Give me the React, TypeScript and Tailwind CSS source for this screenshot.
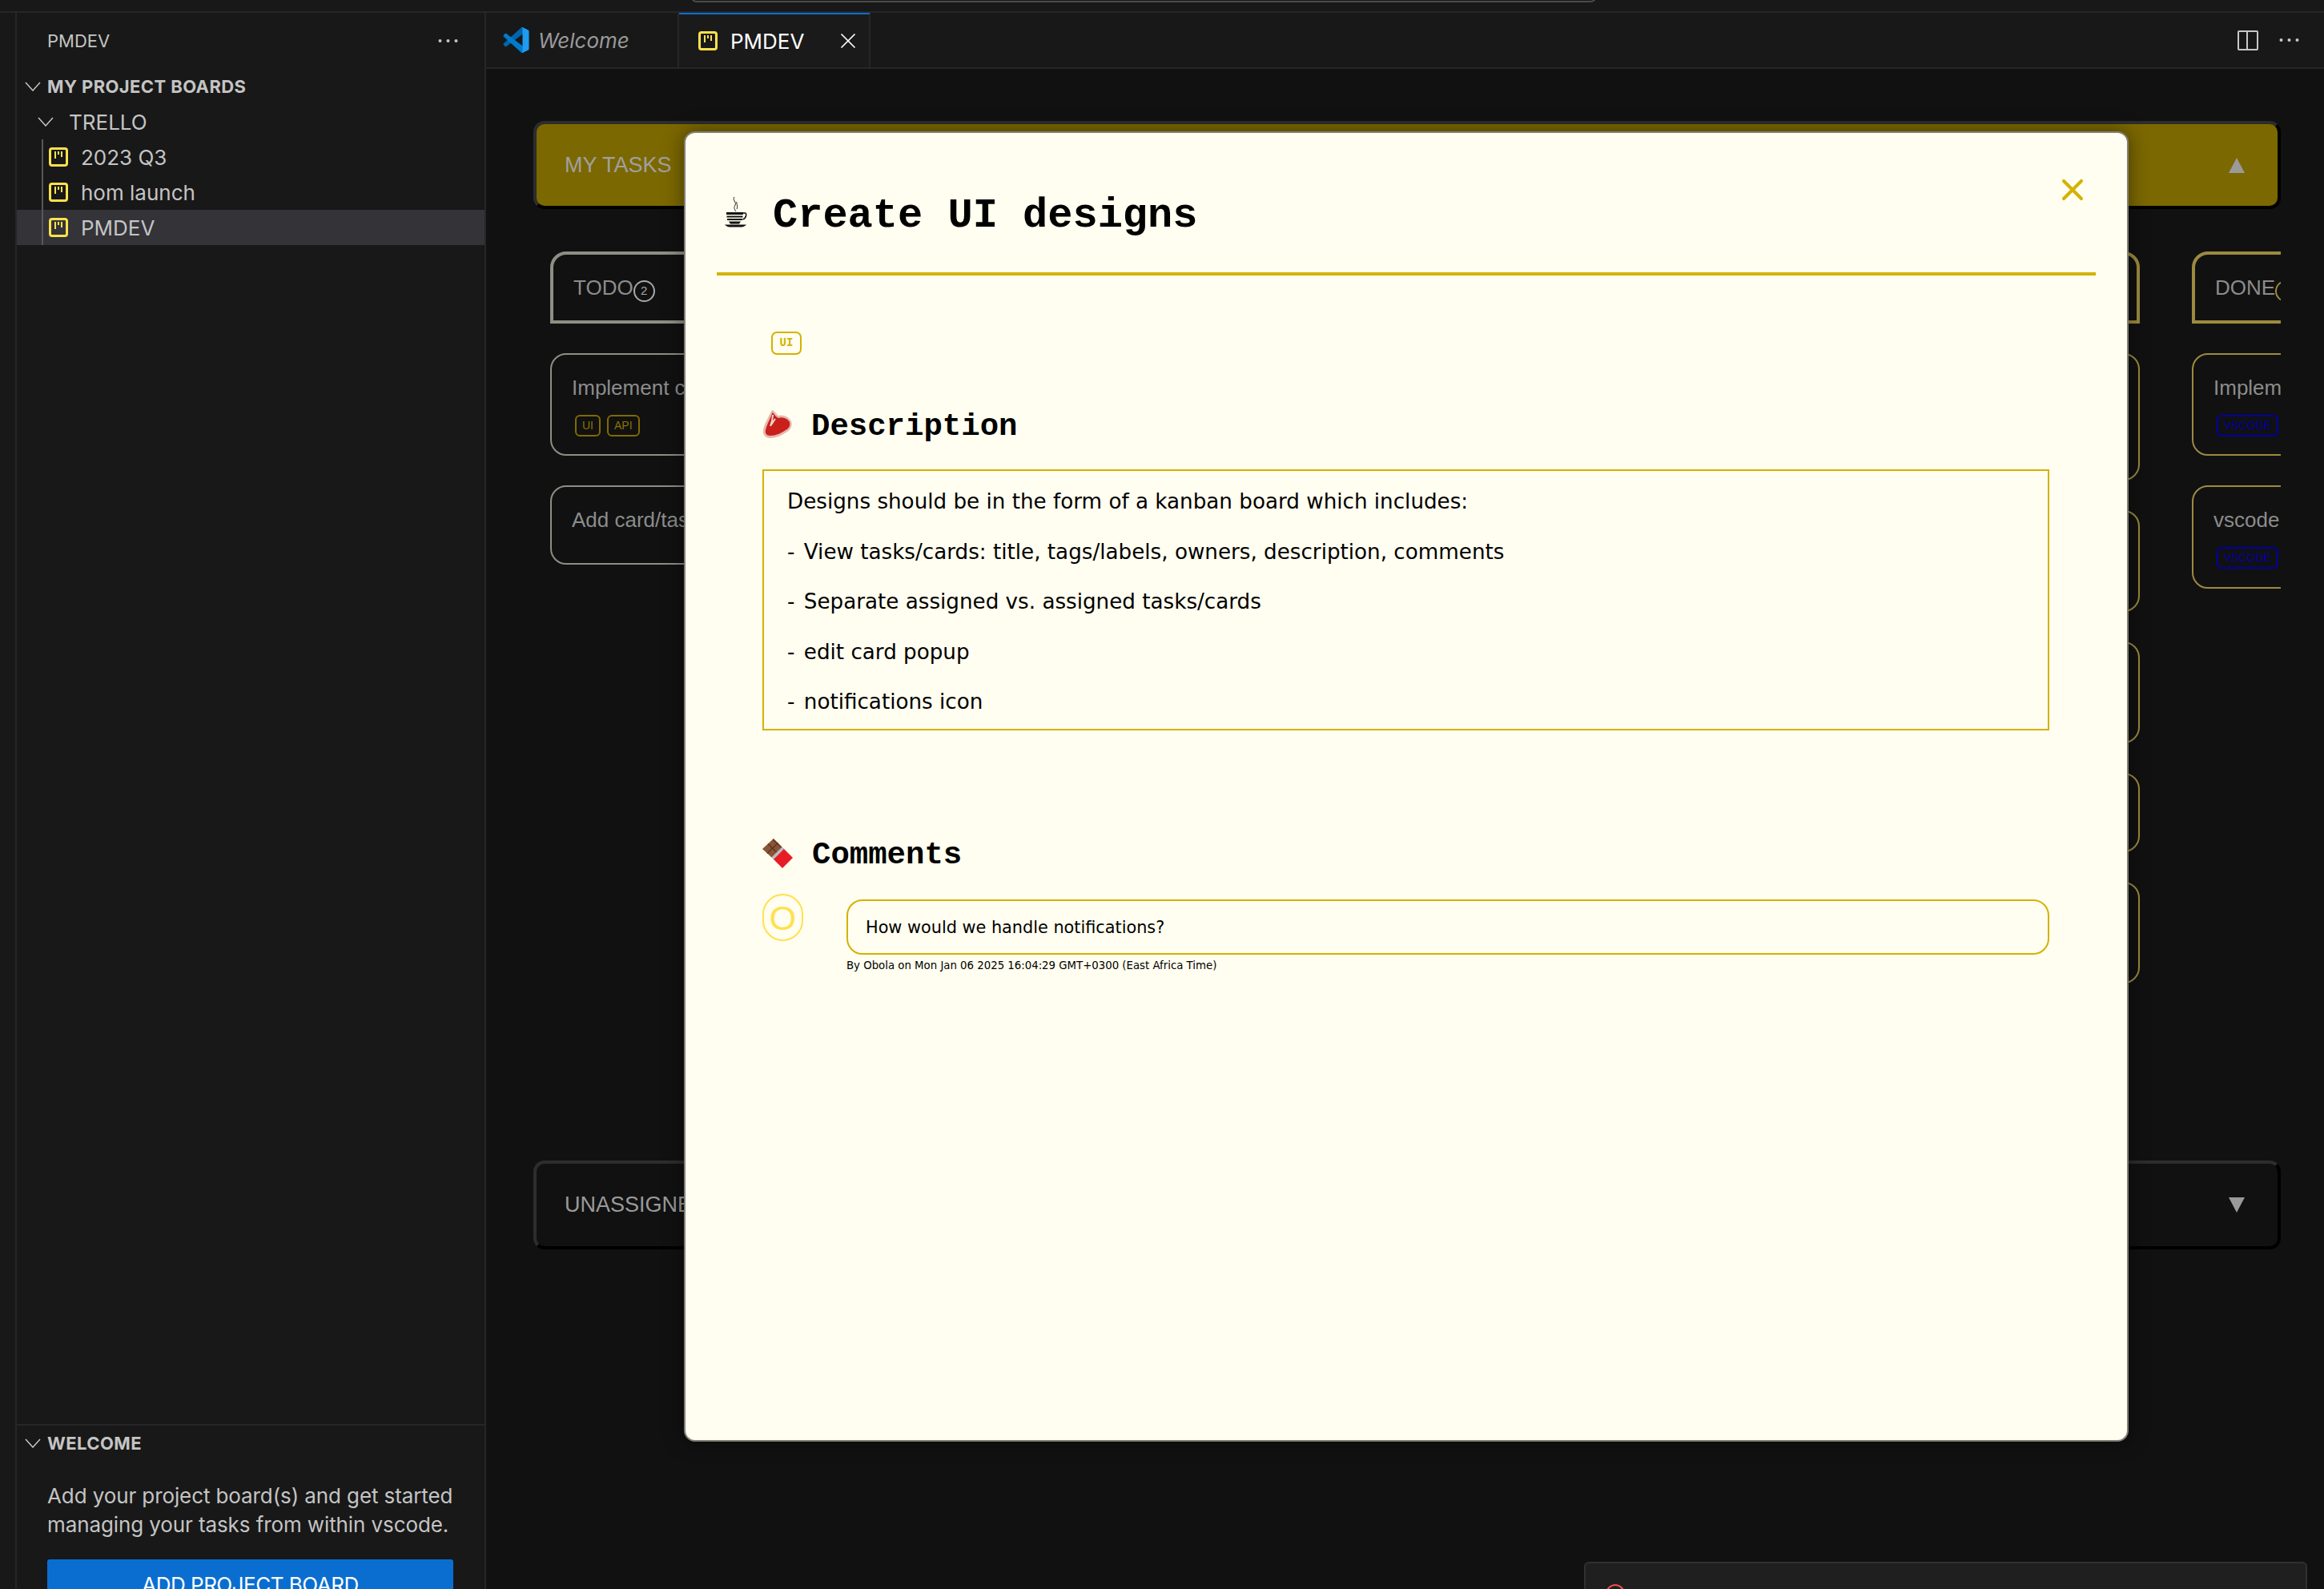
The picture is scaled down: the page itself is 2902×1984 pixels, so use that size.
import { X } from "lucide-react";

function BoardIcon() {
  return (
    <svg width="24" height="24" viewBox="0 0 24 24" fill="none" className="shrink-0">
      <rect x="1.5" y="1.5" width="21" height="21" rx="2.5" stroke="#ffe14d" strokeWidth="3" />
      <path d="M8 5v9M12 5v4M16 5v7" stroke="#ffe14d" strokeWidth="2" />
    </svg>
  );
}

function VscodeLogo() {
  return (
    <svg width="33" height="32" viewBox="0 0 100 100">
      <path fill="#0065A9" d="M96.4614 10.7962L75.8569 0.875542C73.4719 -0.272773 70.6217 0.211611 68.75 2.08333L1.29858 63.5832C-0.515693 65.2373 -0.513607 68.0937 1.30308 69.7452L6.81272 74.754C8.29793 76.1042 10.5347 76.2036 12.1338 74.9905L93.3609 13.3699C96.086 11.3026 100 13.2462 100 16.6667V16.4275C100 14.0265 98.6246 11.8378 96.4614 10.7962Z" />
      <path fill="#007ACC" d="M96.4614 89.2038L75.8569 99.1245C73.4719 100.273 70.6217 99.7884 68.75 97.9167L1.29858 36.4168C-0.515693 34.7627 -0.513607 31.9063 1.30308 30.2548L6.81272 25.246C8.29793 23.8958 10.5347 23.7964 12.1338 25.0095L93.3609 86.6301C96.086 88.6974 100 86.7538 100 83.3333V83.5725C100 85.9735 98.6246 88.1622 96.4614 89.2038Z" />
      <path fill="#1F9CF0" d="M75.8578 99.1263C73.4721 100.274 70.6219 99.7885 68.75 97.9166C71.0564 100.223 75 98.5895 75 95.3278V4.67213C75 1.41039 71.0564 -0.223106 68.75 2.08329C70.6219 0.211402 73.4721 -0.273666 75.8578 0.873633L96.4587 10.7807C98.6234 11.8217 100 14.0112 100 16.4132V83.5871C100 85.9891 98.6234 88.1786 96.4586 89.2196L75.8578 99.1263Z" />
    </svg>
  );
}

function CoffeeIcon() {
  return (
    <svg width="30" height="40" viewBox="0 0 30 40" fill="none" className="shrink-0">
      <path d="M13 1c-3 4 3 6 1 10s-1 5 1 8M16 7c-1 3 2 4 0 9" stroke="#222" strokeWidth="1" />
      <path d="M3 20h21v3H3zM3.5 24.5h20v2h-20zM4 28h19v2H4zM6 31.500h15l-2 3H8z" fill="#111" />
      <path d="M24 21h2.500c2 0 2 6-3 8" stroke="#111" strokeWidth="1.500" />
      <path d="M1 35.500h27c-2 2.500-5 3-8 3H9c-3 0-6-.5-8-3z" fill="#111" />
    </svg>
  );
}

function SteakIcon() {
  return (
    <svg width="36" height="36" viewBox="0 0 36 36" className="ml-[1px] shrink-0">
      <path d="M11 0C15 1 16 5 19 7C24 5 32 8 35 14C37 20 34 24 30 27C24 31 17 35 9 35C3 35-1 31 0 25C1 18 7 8 11 0Z" fill="#e6b9ae" />
      <path d="M11.500 3C14 5 15 8 19 10C24 8 30 10 33 15C34 20 32 23 28 25C22 29 16 32 9 32C4 32 2 29 3 25C4 19 9 11 11.500 3Z" fill="#c9201c" />
      <path d="M12 6C12 10 11 15 9 20M15 11L9.500 19" stroke="#f2d8d0" strokeWidth="2" fill="none" />
    </svg>
  );
}

function ChocolateIcon() {
  return (
    <svg width="38" height="37" viewBox="0 0 38 37" className="shrink-0">
      <path d="M14 0L25 11 12 24 0 13z" fill="#8a5436" />
      <path d="M19.500 5.500L6 18.500M7 6.500l11.500 11.500M13 1l11.500 11" stroke="#5e3320" strokeWidth="1.200" fill="none" />
      <path d="M26 12L38 24 25 37 13 25z" fill="#e81c24" />
      <path d="M24.500 10.500L27 13 14 26l-2.500-2.500z" fill="#b9bcc0" />
    </svg>
  );
}

function Chevron() {
  return (
    <svg width="20" height="12" viewBox="0 0 20 12" fill="none" className="shrink-0">
      <path d="M1 1l9 10 9-10" stroke="#c4c4c4" strokeWidth="1.500" />
    </svg>
  );
}

function Dots({ color }: { color: string }) {
  return (
    <svg width="25" height="6" viewBox="0 0 25 6" className="shrink-0">
      <circle cx="2.500" cy="3" r="2" fill={color} />
      <circle cx="12.500" cy="3" r="2" fill={color} />
      <circle cx="22.500" cy="3" r="2" fill={color} />
    </svg>
  );
}

function SidebarRow({ label, active }: { label: string; active?: boolean }) {
  return (
    <div className={`flex h-[44px] items-center pl-[40px] ${active ? "bg-[#333338]" : ""}`}>
      <BoardIcon />
      <span className="ml-[16px] text-[26px] text-[#c4c4c4]">{label}</span>
    </div>
  );
}

function Sidebar() {
  return (
    <aside className="flex w-[588px] shrink-0 flex-col border-r-2 border-l-2 border-[#262626] bg-[#181818] font-['Inter',sans-serif]">
      <div className="flex h-[70px] items-center justify-between pl-[38px] pr-[33px]">
        <span className="text-[22px] text-[#c4c4c4]">PMDEV</span>
        <Dots color="#c4c4c4" />
      </div>
      <div className="flex h-[44px] items-center pl-[10px]">
        <Chevron />
        <span className="ml-[8px] text-[22px] font-bold tracking-[0.4px] text-[#c4c4c4]">MY PROJECT BOARDS</span>
      </div>
      <div className="flex h-[44px] items-center pl-[26px]">
        <Chevron />
        <span className="ml-[19px] text-[26px] text-[#c4c4c4]">TRELLO</span>
      </div>
      <div className="relative">
        <div className="absolute left-[31px] top-0 bottom-0 w-[2px] bg-[#585858]" />
        <SidebarRow label="2023 Q3" />
        <SidebarRow label="hom launch" />
        <SidebarRow label="PMDEV" active />
      </div>
      <div className="flex-1" />
      <div className="h-[206px] shrink-0 overflow-hidden border-t-2 border-[#262626]">
        <div className="flex h-[44px] items-center pl-[10px]">
          <Chevron />
          <span className="ml-[8px] text-[22px] font-bold tracking-[0.4px] text-[#c4c4c4]">WELCOME</span>
        </div>
        <p className="mt-[26px] whitespace-nowrap pl-[38px] text-[26px] leading-[36px] tracking-[-0.1px] text-[#c4c4c4]">
          Add your project board(s) and get started
          <br />
          managing your tasks from within vscode.
        </p>
        <div className="ml-[38px] mr-[39px] mt-[25px] flex h-[60px] justify-center rounded-[3px] bg-[#0a6ed1] pt-[12px] text-[26px] tracking-[-0.5px] text-white">
          ADD PROJECT BOARD
        </div>
      </div>
    </aside>
  );
}

function TabBar() {
  return (
    <div className="flex h-[70px] shrink-0 items-stretch border-b-2 border-[#262626] bg-[#181818] font-['Inter',sans-serif]">
      <div className="flex w-[241px] items-center pl-[21px] border-r-2 border-[#262626]">
        <VscodeLogo />
        <span className="ml-[11px] text-[26px] italic text-[#9a9a9a]">Welcome</span>
      </div>
      <div className="flex w-[239px] items-center border-r-2 border-t-2 border-r-[#262626] border-t-[#0a6ed1] bg-[#1a1a1a] pl-[24px]">
        <BoardIcon />
        <span className="ml-[16px] text-[26px] text-white">PMDEV</span>
        <X size={32} strokeWidth={1.300} className="ml-[39px] text-white" />
      </div>
      <div className="flex flex-1 items-center justify-end gap-[26px] pr-[31px]">
        <div className="flex h-[25px] w-[26px] rounded-[2px] border-2 border-[#c8c8c8]">
          <div className="w-1/2 border-r-2 border-[#c8c8c8]" />
        </div>
        <Dots color="#c8c8c8" />
      </div>
    </div>
  );
}

function Tag({ label, className }: { label: string; className: string }) {
  return (
    <span className={`flex h-[27px] items-center rounded-[6px] border-2 px-[7px] text-[14px] ${className}`}>
      {label}
    </span>
  );
}

function Card({ title, heightClass, tags, borderClass }: { title?: string; heightClass: string; tags?: React.ReactNode; borderClass: string }) {
  return (
    <div className={`rounded-[20px] border-2 bg-[#111] pl-[25px] pt-[21px] ${heightClass} ${borderClass}`}>
      {title && <div className="whitespace-nowrap text-[26px] leading-[40px] text-[#8c8c8c]">{title}</div>}
      {tags && <div className="ml-[4px] mt-[14px] flex gap-[8px]">{tags}</div>}
    </div>
  );
}

function Board() {
  const gold = "border-[#9c8b3f]";
  const grey = "border-[#8e8e85]";
  return (
    <div className="flex min-h-0 flex-1 flex-col bg-[#111] pl-[59px] pr-[54px] pt-[65px] font-['Liberation_Sans',sans-serif]">
      <div className="flex h-[110px] shrink-0 items-center justify-between rounded-[14px] border-4 border-t-[#2d2d2d] border-l-[#2d2d2d] border-r-black border-b-black bg-[#7c6800] pl-[35px] pr-[41px]">
        <span className="text-[27px] text-[#a0a0a0]">MY TASKS</span>
        <span className="h-0 w-0 border-x-[10px] border-b-[19px] border-x-transparent border-b-[#9a9a9a]" />
      </div>
      <div className="mt-[53px] flex h-[1135px] shrink-0 gap-[65px] overflow-hidden pl-[21px]">
        <div className="flex w-[950px] shrink-0 flex-col gap-[37px]">
          <div className={`flex h-[90px] items-start rounded-tl-[20px] border-4 pl-[25px] pt-[22px] text-[26px] text-[#8c8c8c] ${grey}`}>
            TODO
            <span className="mt-[10px] flex h-[27px] w-[27px] items-center justify-center rounded-full border-2 border-[#a8a8a8] text-[15px] text-[#a8a8a8]">2</span>
          </div>
          <Card
            title="Implement card view"
            heightClass="h-[128px]"
            borderClass={grey}
            tags={
              <>
                <Tag label="UI" className="border-[#7f6b00] text-[#8a7400]" />
                <Tag label="API" className="border-[#7f6b00] text-[#8a7400]" />
              </>
            }
          />
          <Card title="Add card/task" heightClass="h-[99px]" borderClass={grey} />
        </div>
        <div className="flex w-[970px] shrink-0 flex-col gap-[37px]">
          <div className={`h-[90px] rounded-tr-[20px] border-4 ${gold}`} />
          <Card heightClass="h-[159px]" borderClass={gold} />
          <Card heightClass="h-[127px]" borderClass={gold} />
          <Card heightClass="h-[127px]" borderClass={gold} />
          <Card heightClass="h-[99px]" borderClass={gold} />
          <Card heightClass="h-[127px]" borderClass={gold} />
        </div>
        <div className="flex w-[400px] shrink-0 flex-col gap-[37px]">
          <div className={`flex h-[90px] items-start rounded-tl-[20px] border-4 pl-[25px] pt-[22px] text-[26px] text-[#8c8c8c] ${gold}`}>
            DONE
            <span className="mt-[10px] flex h-[27px] w-[27px] shrink-0 items-center justify-center rounded-full border-2 border-[#9c8b3f] text-[15px] text-[#9c8b3f]">2</span>
          </div>
          <Card
            title="Implement board view"
            heightClass="h-[128px]"
            borderClass={gold}
            tags={<Tag label="VSCODE" className="border-[#0000a8] text-[#0000a8]" />}
          />
          <Card
            title="vscode extension"
            heightClass="h-[129px]"
            borderClass={gold}
            tags={<Tag label="VSCODE" className="border-[#0000a8] text-[#0000a8]" />}
          />
        </div>
      </div>
      <div className="flex h-[111px] shrink-0 items-center justify-between rounded-[14px] border-4 border-t-[#2d2d2d] border-l-[#2d2d2d] border-r-black border-b-black bg-[#111] pl-[35px] pr-[41px]">
        <span className="text-[27px] text-[#9a9a9a]">UNASSIGNED</span>
        <span className="h-0 w-0 border-x-[10px] border-t-[19px] border-x-transparent border-t-[#9a9a9a]" />
      </div>
    </div>
  );
}

function Modal() {
  const items = [
    "View tasks/cards: title, tags/labels, owners, description, comments",
    "Separate assigned vs. assigned tasks/cards",
    "edit card popup",
    "notifications icon",
  ];
  return (
    <div className="absolute left-[854px] top-[164px] h-[1636px] w-[1804px] rounded-[14px] border-2 border-[#808078] bg-[#fffef0] px-[39px] font-['DejaVu_Sans',sans-serif] text-black shadow-[0_0_26px_rgba(0,0,0,0.45)]">
      <X size={44} strokeWidth={2.200} className="absolute right-[46px] top-[49px] text-[#d4b200]" />
      <div className="flex h-[178px] items-center border-b-4 border-[#d4b200] pl-[9px] pt-[23px]">
        <CoffeeIcon />
        <h1 className="ml-[31px] pt-[10px] font-['Liberation_Mono',monospace] text-[52px] font-bold">Create UI designs</h1>
      </div>
      <div className="pl-[57px] pr-[58px]">
        <span className="ml-[11px] mt-[70px] flex h-[29px] w-[38px] items-center justify-center rounded-[7px] border-2 border-[#d4b200] font-['Liberation_Mono',monospace] text-[14px] font-bold text-[#d4b200]">
          UI
        </span>
        <div className="mt-[57px] flex h-[60px] items-center">
          <SteakIcon />
          <h2 className="ml-[24px] pt-[6px] font-['Liberation_Mono',monospace] text-[39px] font-bold">Description</h2>
        </div>
        <div className="mt-[26px] h-[326px] border-2 border-[#d4b200] pl-[29px] pt-[7px] text-[26.200px] leading-[62.500px]">
          <div>Designs should be in the form of a kanban board which includes:</div>
          {items.map((item) => (
            <div key={item}>
              <span className="mr-[3px]">-</span> {item}
            </div>
          ))}
        </div>
        <div className="mt-[123px] flex h-[60px] items-center">
          <ChocolateIcon />
          <h2 className="ml-[24px] pt-[6px] font-['Liberation_Mono',monospace] text-[39px] font-bold">Comments</h2>
        </div>
        <div className="mt-[21px] flex gap-[54px]">
          <div className="flex h-[59px] w-[51px] shrink-0 items-center justify-center rounded-full border-2 border-[#ffe14d] pt-[2px] font-['Liberation_Sans',sans-serif] text-[43px] text-[#ffe14d]">
            O
          </div>
          <div className="flex-1 pt-[7px]">
            <div className="flex h-[69px] items-center rounded-[20px] border-2 border-[#d4b200] pl-[22px] pt-[2px] text-[20.800px]">
              How would we handle notifications?
            </div>
            <div className="mt-[4px] text-[13.300px]">By Obola on Mon Jan 06 2025 16:04:29 GMT+0300 (East Africa Time)</div>
          </div>
        </div>
      </div>
    </div>
  );
}

export default function App() {
  return (
    <div className="relative flex h-[1984px] w-[2902px] flex-col overflow-hidden bg-[#181818]">
      <div className="relative h-[16px] shrink-0 border-b-2 border-[#262626]">
        <div className="absolute left-[862px] top-[-20px] h-[23px] w-[1132px] rounded-[8px] border-2 border-[#4a4a4a]" />
      </div>
      <div className="flex min-h-0 flex-1">
        <div className="w-[19px] shrink-0" />
        <Sidebar />
        <div className="flex min-w-0 flex-1 flex-col">
          <TabBar />
          <Board />
        </div>
      </div>
      <Modal />
      <div className="absolute left-[1978px] top-[1950px] h-[80px] w-[903px] rounded-[6px] border-2 border-[#303030] bg-[#1f1f1f] pl-[25px] pt-[26px]">
        <div className="h-[24px] w-[24px] rounded-full border-2 border-[#f14c4c]" />
      </div>
    </div>
  );
}
